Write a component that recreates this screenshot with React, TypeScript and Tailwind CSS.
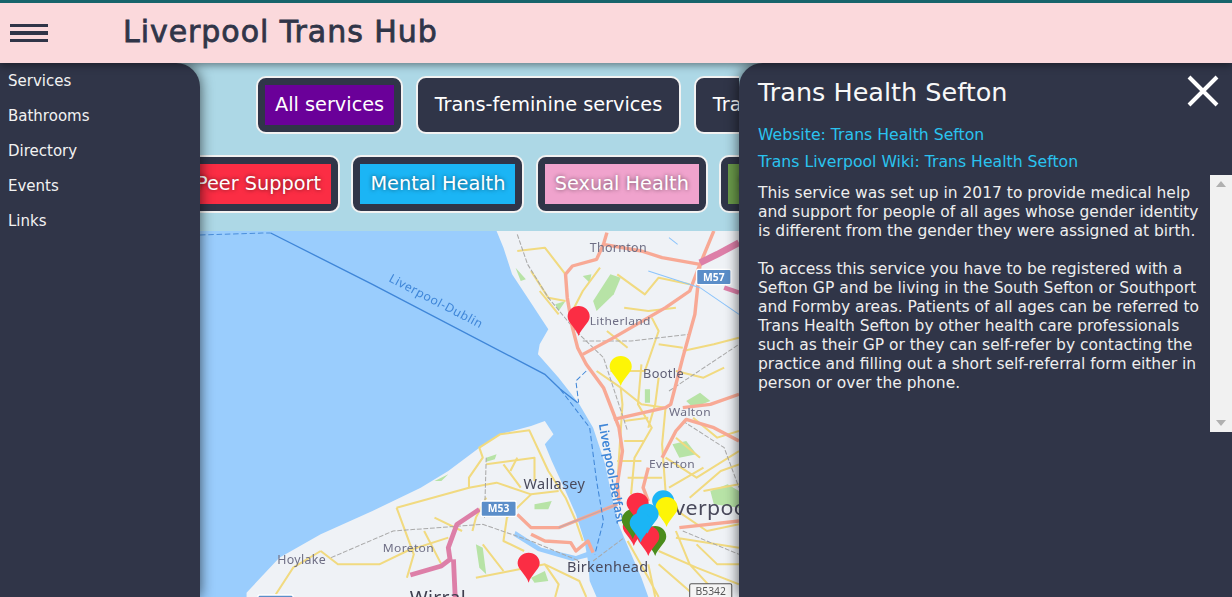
import React from "react";

const font = { fontFamily: '"DejaVu Sans", sans-serif' };

const menuItems = ["Services", "Bathrooms", "Directory", "Events", "Links"];

function FilterButton({ label, bg, className }: { label: string; bg: string; className?: string }) {
  return (
    <div className={`shrink-0 h-[58px] rounded-[10px] border-2 border-[#f2f2f2] bg-[#303548] p-[7px] ${className ?? ""}`}>
      <div className={`flex h-[40px] items-center px-[10px] pt-[1px] text-[19.3px] text-white whitespace-nowrap ${bg}`}>
        {label}
      </div>
    </div>
  );
}

// map coords are in zoom units, see viewBox below
const yellowRoads = [
  "M920 60 L1000 50 L1060 130 M960 120 L1010 200 L1060 210 M985 180 L1040 250 M1160 110 L1110 180 L1080 240",
  "M1190 420 L1290 420 L1330 300 L1310 260 M1150 420 L1220 470 L1280 520 L1350 530 M1220 470 L1225 520 L1215 680 L1210 780",
  "M1280 400 L1270 520 L1310 590 L1260 680 L1250 790 M1330 440 L1320 520 L1300 590 M1400 360 L1490 340 L1563 320 M1350 530 L1340 640 L1350 780",
  "M1230 630 L1290 630 M1210 690 L1280 690 M1350 680 L1440 740 L1563 660 M1420 800 L1510 720 L1563 700 M1360 770 L1460 710",
  "M570 830 L780 770 L860 755 L960 790 L1040 780 M570 830 L620 970 L600 1040 M780 770 L780 740 L820 680 L810 650 L870 610 L955 598 L1010 720 L1060 800 L1090 870 L1110 930",
  "M830 700 L900 690 L970 680 L970 750 M880 700 L930 770 M960 790 L890 860 L880 930 L940 960",
  "M350 960 L400 1000 L520 1000 L600 960 L720 920 M350 960 L270 1010 L220 1090 M790 900 L800 860 L830 800",
  "M800 1040 L900 1020 L1000 1000 L1100 1050 L1120 1098 M1000 1000 L1040 1060 L1030 1098",
  "M1300 1000 L1320 1098 M1330 960 L1440 1010 L1563 1060 M1380 900 L1420 1000 L1500 1090 M1330 1000 L1430 1090 M1380 920 L1563 950 M1240 930 L1300 1040 L1330 1098",
  "M1210 130 L1290 190 L1330 140 L1420 160 M1230 230 L1300 240 L1380 230 M1180 300 L1240 350 M1330 340 L1400 350",
  "M1380 420 L1460 440 L1520 410 M1430 560 L1500 620 L1563 600 M1380 620 L1450 680 M1460 780 L1563 760",
  "M1230 570 L1300 560 M1240 740 L1340 740 M1370 830 L1470 900 L1563 880 M1440 940 L1500 1000 L1563 1000",
  "M680 860 L760 900 M650 900 L700 1000 M820 940 L880 1020 M900 720 L920 680",
];

const orangeRoads = [
  "M1180 5 L1170 40 L1280 60 L1340 80 L1450 100 L1490 0",
  "M1170 40 L1150 85 L1080 105 L1060 130 L1065 200 L1080 290 L1095 350 L1120 400 L1170 470 L1215 590 L1225 660 L1210 760 L1215 810",
  "M1450 100 L1420 180 L1350 230 L1200 320 L1110 370",
  "M1450 100 L1435 250 L1400 380 L1365 520 L1350 530 L1200 565",
  "M1563 490 L1480 520 L1400 530 M1563 630 L1490 590 L1410 565 L1380 600 L1340 680",
  "M1300 710 L1285 770 L1300 810 M1390 890 L1563 870",
  "M920 850 L960 890 L1040 890 L1210 820 M960 910 L1000 930 L1075 935 L1090 960 L1125 930 L1140 965",
];

const greyRails = [
  "M920 10 L950 100 L1010 200 L1090 300 L1170 380 L1240 600",
  "M1110 330 L1250 330 L1420 310 M1360 480 L1563 340",
  "M380 980 L560 900 L820 880 L960 930 L1100 990 M830 680 L825 860",
  "M1140 990 L1230 920 M1400 570 L1520 650 L1563 770 M1400 900 L1563 970",
];

const parks = [
  "M1140 210 L1190 130 L1220 140 L1200 190 L1150 240 Z",
  "M1030 220 L1060 210 L1040 240 Z M1110 135 L1135 130 L1130 155 Z M915 110 L945 145 L930 150 Z",
  "M1290 475 L1305 475 L1305 515 L1290 515 Z M1410 510 L1450 485 L1480 510 L1430 530 Z",
  "M1370 640 L1410 630 L1440 670 L1390 680 Z M1480 780 L1530 760 L1563 780 L1563 830 L1490 820 Z",
  "M830 680 L860 670 L855 685 L830 692 Z M970 820 L1020 810 L1010 835 L970 835 Z",
  "M800 940 L820 950 L830 1030 L810 1010 Z M960 1040 L1000 1020 L1010 1050 L970 1055 Z M680 750 L720 730 L700 750 Z",
];

function Pin({ x, y, color }: { x: number; y: number; color: string }) {
  return (
    <path
      d={`M${x} ${y} C${x - 8} ${y - 25} ${x - 32} ${y - 40} ${x - 32} ${y - 58} A32 32 0 1 1 ${x + 32} ${y - 58} C${x + 32} ${y - 40} ${x + 8} ${y - 25} ${x} ${y} Z`}
      fill={color}
    />
  );
}

const pins = [
  { x: 1098, y: 315, color: "#fb2d44" },
  { x: 1220, y: 465, color: "#fdf506" },
  { x: 953, y: 1055, color: "#fb2d44" },
  { x: 1258, y: 945, color: "#fb2d44" },
  { x: 1255, y: 925, color: "#4a8c1c" },
  { x: 1269, y: 875, color: "#fb2d44" },
  { x: 1343, y: 868, color: "#1bb5f5" },
  { x: 1353, y: 888, color: "#fdf506" },
  { x: 1320, y: 975, color: "#4a8c1c" },
  { x: 1300, y: 975, color: "#fb2d44" },
  { x: 1298, y: 908, color: "#1bb5f5" },
  { x: 1278, y: 935, color: "#1bb5f5" },
];

function Shield({ x, y, w, label, plain }: { x: number; y: number; w: number; label: string; plain?: boolean }) {
  return (
    <g>
      <rect
        x={x}
        y={y}
        width={w}
        height={46}
        rx={5}
        fill={plain ? "#f5f5f5" : "#5b8ec9"}
        stroke={plain ? "#555" : "#fff"}
        strokeWidth={plain ? 3 : 4}
      />
      <text
        x={x + w / 2}
        y={y + 34}
        textAnchor="middle"
        fontSize={30}
        fontWeight={plain ? 400 : 700}
        fill={plain ? "#555" : "#fff"}
      >
        {label}
      </text>
    </g>
  );
}

function MapLabel({ x, y, size, children, color }: { x: number; y: number; size: number; children: string; color?: string }) {
  return (
    <text x={x} y={y} fontSize={size} fill={color ?? "#6f6f85"} letterSpacing={1}>
      {children}
    </text>
  );
}

function MapView() {
  return (
    <svg
      viewBox="0 0 1563 1098"
      preserveAspectRatio="none"
      className="block h-[366px] w-[539px] blur-[0.4px]"
      style={{ fontFamily: '"Noto Sans", sans-serif' }}
    >
      <rect width="1563" height="1098" fill="#9acdfd" />
      <path
        d="M860 0 L880 50 L905 130 L950 200 L1010 295 L985 340 L980 370 L1040 440 L1100 520 L1140 590 L1175 700 L1195 800 L1210 870 L1230 920 L1280 1040 L1300 1098 L1563 1098 L1563 0 Z"
        fill="#eff2f6"
      />
      <path
        d="M135 1085 L230 980 L350 910 L500 840 L640 770 L720 720 L810 650 L870 610 L960 585 L1000 570 L1025 610 L1000 640 L1020 690 L1060 780 L1090 850 L1115 930 L1125 990 L1130 1050 L1150 1098 L135 1098 Z"
        fill="#eff2f6"
      />
      {parks.map((d, i) => (
        <path key={i} d={d} fill="#b7e3a6" />
      ))}
      {/* docks */}
      <path d="M915 900 L990 950 L1090 975 L1130 960 L1140 975 L1080 990 L980 960 L910 915 Z" fill="#9acdfd" />
      {yellowRoads.map((d, i) => (
        <path key={i} d={d} fill="none" stroke="#f1da80" strokeWidth={6} strokeLinejoin="round" />
      ))}
      {greyRails.map((d, i) => (
        <path key={i} d={d} fill="none" stroke="#a9a9a9" strokeWidth={3} strokeDasharray="14 5" />
      ))}
      {orangeRoads.map((d, i) => (
        <path key={i} d={d} fill="none" stroke="#f8a995" strokeWidth={10} strokeLinejoin="round" />
      ))}
      <path d="M1450 95 L1500 70 L1563 35" fill="none" stroke="#dd7fa8" strokeWidth={20} />
      <path d="M1520 170 L1563 185" fill="none" stroke="#dd7fa8" strokeWidth={14} />
      <path
        d="M610 1032 L700 1005 L725 985 L720 950 L745 880 L810 835 M735 985 L740 1098"
        fill="none"
        stroke="#dd7fa8"
        strokeWidth={14}
        strokeLinejoin="round"
      />
      <path d="M1040 890 L1210 820" fill="none" stroke="#c9a6a6" strokeWidth={4} />
      <path d="M1360 20 L1385 40 M1300 120 L1450 170 L1563 250" fill="none" stroke="#8cc4fb" strokeWidth={3} />
      {/* ferry routes */}
      <path d="M0 12 L180 6 L205 6" fill="none" stroke="#4a8edb" strokeWidth={3} strokeDasharray="16 8" />
      <path d="M205 6 L500 160 L1000 430 L1045 475 L1095 515" fill="none" stroke="#3f86d8" strokeWidth={4} />
      <path
        d="M1120 420 L1090 450 L1098 515 M1045 475 L1130 590 L1150 750 L1170 870 L1145 970"
        fill="none"
        stroke="#3f86d8"
        strokeWidth={3}
        strokeDasharray="16 8"
      />
      <text x={0} y={0} transform="translate(545 150) rotate(28)" fontSize={36} fill="#3f86d8" letterSpacing={1.5}>
        Liverpool-Dublin
      </text>
      <text x={0} y={0} transform="translate(1156 580) rotate(80)" fontSize={37} fontWeight={600} fill="#3f86d8">
        Liverpool-Belfast
      </text>
      <MapLabel x={1130} y={62} size={36}>Thornton</MapLabel>
      <MapLabel x={1130} y={283} size={35}>Litherland</MapLabel>
      <MapLabel x={1285} y={442} size={37} color="#5f5f75">Bootle</MapLabel>
      <MapLabel x={1360} y={555} size={35}>Walton</MapLabel>
      <MapLabel x={1302} y={710} size={35}>Everton</MapLabel>
      <MapLabel x={938} y={775} size={42} color="#4a4a5c">Wallasey</MapLabel>
      <MapLabel x={530} y={963} size={35}>Moreton</MapLabel>
      <MapLabel x={224} y={998} size={36}>Hoylake</MapLabel>
      <MapLabel x={1064} y={1022} size={42} color="#4a4a5c">Birkenhead</MapLabel>
      <MapLabel x={1325} y={852} size={62} color="#4a4a5c">Liverpool</MapLabel>
      <MapLabel x={608} y={1120} size={56} color="#3f3f4f">Wirral</MapLabel>
      <Shield x={1440} y={115} w={100} label="M57" />
      <Shield x={815} y={810} w={102} label="M53" />
      <Shield x={1420} y={1058} w={122} label="B5342" plain />
      <Shield x={168} y={1092} w={102} label="" />
      {pins.map((p, i) => (
        <Pin key={i} {...p} />
      ))}
    </svg>
  );
}

export default function App() {
  return (
    <div className="flex h-[597px] w-[1232px] flex-col overflow-hidden bg-[#add8e6]" style={font}>
      <header className="relative z-30 flex h-[63px] shrink-0 items-center border-t-[3px] border-[#17646b] bg-[#fbd9dc] shadow-[0_2px_8px_rgba(0,0,0,0.45)]">
        <div className="ml-[10px] flex w-[38px] flex-col gap-[4px]">
          <div className="h-[3.5px] bg-[#303548]" />
          <div className="h-[3.5px] bg-[#303548]" />
          <div className="h-[3.5px] bg-[#303548]" />
        </div>
        <h1 className="ml-[75px] mb-[4px] text-[30px] tracking-[0.95px] text-[#303548] [-webkit-text-stroke:0.8px_#303548]">
          Liverpool Trans Hub
        </h1>
      </header>

      <div className="flex min-h-0 flex-1">
        <nav className="relative z-20 w-[200px] shrink-0 rounded-tr-[24px] bg-[#303548] pl-[8px] pt-[1px] text-[15px] text-[#f2f2f2] shadow-[0_0_14px_rgba(0,0,0,0.65)]">
          {menuItems.map((item) => (
            <div key={item} className="flex h-[35px] items-center">
              {item}
            </div>
          ))}
        </nav>

        <main className="flex min-w-0 flex-1 flex-col overflow-hidden">
          <div className="mt-[13px] flex gap-[12.5px] pl-[56px]">
            <FilterButton label="All services" bg="bg-[#6a0099]" />
            <FilterButton label="Trans-feminine services" bg="bg-[#303548]" />
            <FilterButton label="Trans-masculine services" bg="bg-[#303548]" />
          </div>
          <div className="mt-[21px] flex justify-start gap-[11.5px] [text-shadow:0_0_4px_rgba(0,0,0,0.55)]">
            <FilterButton label="Peer Support" bg="bg-[#fb2d44]" className="-ml-[23px]" />
            <FilterButton label="Mental Health" bg="bg-[#1bb5f5]" />
            <FilterButton label="Sexual Health" bg="bg-[#f0a3cd]" />
            <FilterButton label="Surgery" bg="bg-[#6a9a4a]" />
          </div>
          <div className="mt-[18px] h-[366px] shrink-0">
            <MapView />
          </div>
        </main>

        <aside className="relative z-20 flex w-[493px] shrink-0 flex-col rounded-tl-[24px] bg-[#303548] shadow-[0_0_14px_rgba(0,0,0,0.65)]">
          <div className="flex items-start justify-between pl-[19px] pr-[13px]">
            <h2 className="mt-[12px] text-[25.5px] leading-[34px] text-[#f8f8f8]">Trans Health Sefton</h2>
            <svg viewBox="0 0 32 32" className="mt-[12px] h-[32px] w-[32px]" fill="none" stroke="#ffffff" strokeWidth={4}>
              <path d="M2 2 L30 30 M30 2 L2 30" />
            </svg>
          </div>
          <div className="mt-[15px] flex flex-col gap-[6px] pl-[19px] text-[15.7px] leading-[21px] text-[#2ac3ef]">
            <a>Website: Trans Health Sefton</a>
            <a>Trans Liverpool Wiki: Trans Health Sefton</a>
          </div>
          <div className="mt-[3px] flex h-[257px] items-stretch">
            <div className="flex-1 pl-[19px] pr-[8px] pt-[9px] text-[15.5px] leading-[19px] text-[#eeeeee]">
              <p>
                This service was set up in 2017 to provide medical help
                <br />
                and support for people of all ages whose gender identity
                <br />
                is different from the gender they were assigned at birth.
              </p>
              <p className="mt-[19px]">
                To access this service you have to be registered with a
                <br />
                Sefton GP and be living in the South Sefton or Southport
                <br />
                and Formby areas. Patients of all ages can be referred to
                <br />
                Trans Health Sefton by other health care professionals
                <br />
                such as their GP or they can self-refer by contacting the
                <br />
                practice and filling out a short self-referral form either in
                <br />
                person or over the phone.
              </p>
            </div>
            <div className="flex w-[22px] shrink-0 flex-col items-center justify-between bg-[#f1f1f1] py-[6px]">
              <svg viewBox="0 0 10 6" className="h-[6px] w-[10px]" fill="#b0b0b0">
                <path d="M5 0 L10 6 L0 6 Z" />
              </svg>
              <svg viewBox="0 0 10 6" className="h-[6px] w-[10px]" fill="#b0b0b0">
                <path d="M0 0 L10 0 L5 6 Z" />
              </svg>
            </div>
          </div>
        </aside>
      </div>
    </div>
  );
}
